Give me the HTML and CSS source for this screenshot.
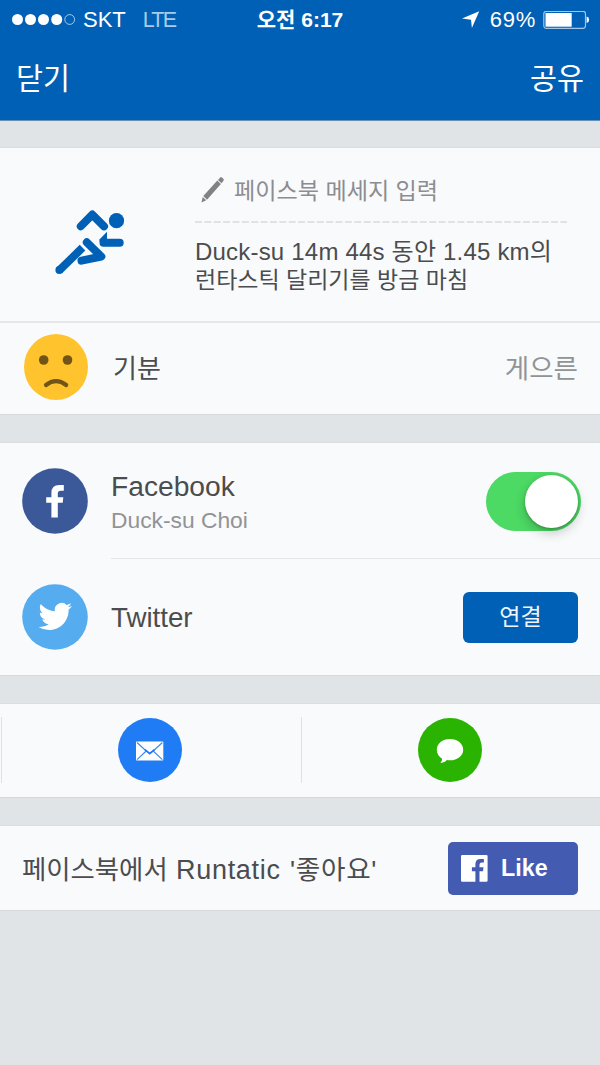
FILE: index.html
```html
<!DOCTYPE html>
<html lang="ko">
<head>
<meta charset="utf-8">
<title>공유</title>
<link rel="stylesheet" href="styles.css">
</head>
<body>
<header class="header">
  <div class="status">
    <div class="status-left">
      <svg class="signal" width="64" height="14" viewBox="0 0 64 14"><g fill="#fff"><circle cx="5.500" cy="6.500" r="5.500"/><circle cx="18.500" cy="6.500" r="5.500"/><circle cx="31.500" cy="6.500" r="5.500"/><circle cx="44.700" cy="6.500" r="5.500"/></g><circle cx="57.700" cy="6.500" r="4.900" fill="none" stroke="#a9cbe8" stroke-width="1"/></svg>
      <span class="carrier">SKT</span><span class="network">LTE</span>
    </div>
    <div class="time">오전 6:17</div>
    <div class="status-right">
      <svg class="location" width="18" height="18" viewBox="0 0 18 18"><path d="M17.200.3 0 7.500l9 1.300.9 8.300z" fill="#fff"/></svg>
      <span class="percent">69%</span>
      <svg class="battery" width="47" height="19" viewBox="0 0 47 19"><rect x=".8" y=".3" width="41.700" height="17" rx="2.500" fill="none" stroke="#9fc6e8" stroke-width="1.200"/><path d="M2.500 2H28.700v13.700H2.500z" fill="#fff"/><path d="M43.600 5.500q2.500.5 2.500 3.300t-2.500 3.300z" fill="#fff"/></svg>
    </div>
  </div>
  <nav class="nav"><span>닫기</span><span>공유</span></nav>
</header>
<main>
  <section class="card">
    <div class="message">
      <svg class="runner" width="110" height="90" viewBox="0 0 110 90"><g fill="none" stroke="#0060b6" stroke-width="8" stroke-linecap="round" stroke-linejoin="round"><path d="M40.800 31.300 52.300 19.600 64 31.300M63.500 47.700H79.700M46.800 47.300 61.300 61.500 41.500 65.700"/><path d="M19.500 75.200 42.500 52.700" stroke-linecap="butt"/></g><circle cx="19.400" cy="75.100" r="4" fill="#0060b6"/><path d="M59.400 46.500V44.500L67 36.800V47z" fill="#0060b6"/><circle cx="76.500" cy="25.700" r="7.600" fill="#0060b6"/></svg>
      <div class="compose">
        <div class="prompt"><svg width="26" height="28" viewBox="0 0 26 28"><path d="M1.500 26.500 2.700 20.900 6.200 24.300zM3.300 20.100 17.300 4.600 20.900 8 7 23.800zM18 4 20.200 1.400Q21 .7 22 1.500L23.300 2.800Q24.200 3.800 23.500 4.700L21.500 7.300z" fill="#808285"/></svg><span>페이스북 메세지 입력</span></div>
        <svg class="dashes" width="373" height="2" viewBox="0 0 373 2"><path d="M0 1H372" stroke="#d7dadd" stroke-width="1.600" stroke-dasharray="7 2.370"/></svg>
        <p class="summary"><span class="line-one">Duck-su 14m 44s 동안 1.45 km의</span><br><span class="line-two">런타스틱 달리기를 방금 마침</span></p>
      </div>
    </div>
    <div class="mood">
      <svg class="mood-face" width="66" height="66" viewBox="0 0 66 66"><ellipse cx="33" cy="33" rx="32" ry="33" fill="#ffc32d"/><g fill="#715417"><circle cx="20.700" cy="26" r="4.800"/><circle cx="44.500" cy="26" r="4.800"/></g><path d="M23 51Q33 43.200 43.200 51" fill="none" stroke="#715417" stroke-width="4.200" stroke-linecap="round"/></svg>
      <span class="mood-label">기분</span><span class="mood-value">게으른</span>
    </div>
  </section>
  <section class="card networks">
    <div class="network-row facebook">
      <svg width="66" height="66" viewBox="0 0 66 66"><circle cx="33" cy="33" r="32.800" fill="#3b5998"/><path d="M29.400 49.500V34.700H24.200V29.200H29.400V25Q29.400 17 37.300 17H41.800V22.700H38.700Q35.800 22.700 35.800 25.500V29.200H41.300L40.700 34.700H35.800V49.500z" fill="#fff"/></svg>
      <div class="account"><div class="facebook-name">Facebook</div><div class="user">Duck-su Choi</div></div>
      <div class="toggle"><div class="knob"></div></div>
    </div>
    <div class="network-row twitter">
      <svg width="66" height="66" viewBox="0 0 66 66"><circle cx="33" cy="33" r="32.800" fill="#55acee"/><svg x="16.500" y="15.700" width="33.500" height="33.500" viewBox="0 0 24 24"><path fill="#fff" d="M23.953 4.570a10 10 0 01-2.825.775 4.958 4.958 0 002.163-2.723c-.951.555-2.005.959-3.127 1.184a4.920 4.920 0 00-8.384 4.482C7.690 8.095 4.067 6.130 1.640 3.162a4.822 4.822 0 00-.666 2.475c0 1.710.870 3.213 2.188 4.096a4.904 4.904 0 01-2.228-.616v.060a4.923 4.923 0 003.946 4.827 4.996 4.996 0 01-2.212.085 4.936 4.936 0 004.604 3.417 9.867 9.867 0 01-6.102 2.105c-.390 0-.779-.023-1.170-.067a13.995 13.995 0 007.557 2.209c9.053 0 13.998-7.496 13.998-13.985 0-.210 0-.420-.015-.630A9.935 9.935 0 0024 4.590z"/></svg></svg>
      <div class="account twitter-name">Twitter</div>
      <div class="connect">연결</div>
    </div>
  </section>
  <section class="card channels">
    <div class="channel"><svg width="64" height="64" viewBox="0 0 64 64"><circle cx="32" cy="32" r="32" fill="#1f7cf4"/><rect x="18" y="23.500" width="27.300" height="19" rx=".7" fill="#fff"/><path d="M19 24.500 28.200 33 31.700 35.500 35.200 33 44.400 24.500M19 41.600 28.200 33M44.400 41.600 35.200 33" fill="none" stroke="#3988f3" stroke-width="1.100"/><path d="M27 31.700 31.700 35.600 36.400 31.700" fill="none" stroke="#1f7cf4" stroke-width="1.700"/></svg></div>
    <div class="channel"><svg width="64" height="64" viewBox="0 0 64 64"><circle cx="32" cy="32" r="32" fill="#2ab300"/><path d="M32 21c7.500 0 13.200 4.600 13.200 10.700S39.500 42.300 32 42.300q-1.500 0-3-.3c-2.300 2.200-4.600 3-6.700 3q2-1.800 1.800-4.300c-3.200-2-5.300-5.300-5.300-9C18.800 25.600 24.500 21 32 21z" fill="#fff"/></svg></div>
  </section>
  <section class="card like-row">
    <div class="like-copy">페이스북에서 <span class="brand">Runtatic</span> <span class="quoted">'좋아요'</span></div>
    <div class="like"><svg width="27" height="27" viewBox="0 0 27 27"><path d="M1.300 0H25.300Q26.600 0 26.600 1.300V25.400Q26.600 26.700 25.300 26.700H18.500V16.300H22L22.500 12.200H18.500V9.800Q18.500 7.600 20.700 7.600H22.900V3.900H19.600Q14.400 3.900 14.400 9.300V12.200H10.900V16.300H14.400V26.700H1.300Q0 26.700 0 25.400V1.300Q0 0 1.300 0z" fill="#fff"/></svg><span>Like</span></div>
  </section>
</main>
</body>
</html>
```
FILE: styles.css
```css
* { box-sizing: border-box; }
body { margin: 0; width: 600px; height: 1065px; overflow: hidden; background: #e0e4e7; color: #4b4c4e; font-family: "Liberation Sans", "Noto Sans CJK KR", sans-serif; white-space: nowrap; }
svg { display: block; flex: none; }
.header { height: 121px; background: #0060b6; border-bottom: 1px solid #6790b4; color: #fff; }
.status { height: 40px; display: grid; grid-template-columns: 200px 200px 200px; align-items: center; font-size: 22px; line-height: 26px; }
.status-left, .status-right { display: flex; align-items: center; }
.status-left { padding-left: 12px; }
.carrier { margin-left: 7px; }
.network { margin-left: 17px; color: #a9cbe8; font-size: 21.5px; letter-spacing: -1.8px; }
.time { text-align: center; font-size: 21px; font-weight: 700; }
.status-right { justify-content: flex-end; padding-right: 10px; }
.percent { margin: 0 7px 0 10px; letter-spacing: .7px; }
.nav { height: 78px; padding: 0 16px; display: flex; justify-content: space-between; align-items: center; font-size: 29.3px; line-height: 40px; }
main { padding-top: 26px; display: flex; flex-direction: column; gap: 27px; }
.card { background: #f9fafc; border-top: 1px solid #dadddf; border-bottom: 1px solid #d6d9db; }
.message { height: 175px; display: flex; border-bottom: 2px solid #e5e7e9; }
.runner { margin: 47px 0 0 40px; }
.compose { margin-left: 45px; padding-top: 27px; }
.prompt { display: flex; align-items: center; height: 30px; padding-left: 5px; gap: 8px; color: #8c8d90; font-size: 23.1px; }
.prompt span { margin-bottom: 2px; }
.dashes { margin-top: 16px; }
.summary { margin: 15px 0 0; font-size: 24px; line-height: 28px; }
.line-one { letter-spacing: .2px; }
.line-two { font-size: 23px; }
.mood { height: 91px; display: flex; align-items: center; padding: 0 22px 0 23px; }
.mood-face { margin-bottom: 3px; }
.mood-label { margin: 0 0 4px 24px; font-size: 26px; }
.mood-value { margin: 0 0 4px auto; font-size: 26.5px; color: #929395; }
.networks { height: 234px; }
.network-row { display: flex; align-items: center; padding-left: 22px; height: 116px; }
.account { flex: 1; margin-left: 23px; height: 116px; }
.facebook .account { padding-top: 26px; }
.facebook-name { font-size: 28.2px; line-height: 34px; }
.user { font-size: 22.8px; line-height: 34px; color: #929395; }
.toggle { width: 95px; height: 59px; margin-right: 19px; border-radius: 30px; background: #4cd964; padding: 3px; display: flex; justify-content: flex-end; }
.knob { width: 53px; height: 53px; border-radius: 50%; background: #fff; box-shadow: 0 5px 12px rgba(0,0,0,.2), 0 1px 3px rgba(0,0,0,.25); }
.facebook { background: linear-gradient(#e3e5e7, #e3e5e7) 111px 115px / 489px 1px no-repeat; }
.twitter-name { font-size: 27.7px; line-height: 118px; }
.connect { width: 115px; height: 51px; margin-right: 22px; border-radius: 6px; background: #0060b6; color: #f0f6fc; font-size: 23px; line-height: 50px; text-align: center; }
.channels { height: 95px; padding-bottom: 2px; display: grid; grid-template-columns: 300px 300px; align-items: center; }
.channel { height: 66px; display: flex; justify-content: center; align-items: center; background: linear-gradient(#dfe2e4, #dfe2e4) 1px 0 / 1px 66px no-repeat; }
.like-row { height: 86px; display: flex; align-items: center; justify-content: space-between; padding: 0 22px; }
.like-copy { padding-top: 3px; font-size: 26.4px; line-height: 40px; }
.brand { margin-left: 1px; font-size: 27px; letter-spacing: .7px; }
.quoted { margin-left: 2px; font-size: 26.6px; letter-spacing: .7px; }
.like { display: flex; align-items: center; width: 130px; height: 53px; padding-left: 13px; gap: 13px; border-radius: 5px; background: #435bb1; color: #fff; font-size: 23.3px; font-weight: 700; }
```
